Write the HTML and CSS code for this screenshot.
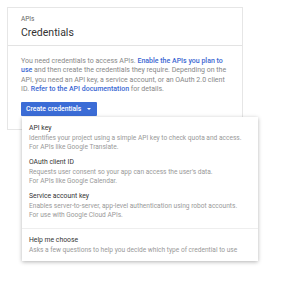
FILE: index.html
```html
<!DOCTYPE html>
<html lang="en">
<head>
    <meta charset="UTF-8">
    <title>Credentials</title>
    <link rel="stylesheet" href="styles.css">
</head>
<body>
    <div class="card">
        <div class="card-header">
            <div class="crumb">APIs</div>
            <h1>Credentials</h1>
        </div>
        <div class="card-body">
            <p class="intro">You need credentials to access APIs. <a href="#">Enable the APIs you plan to use</a> and then create the credentials they require. Depending on the API, you need an API key, a service account, or an OAuth 2.0 client ID. <a href="#">Refer to the API documentation</a> for details.</p>
            <div class="create">
                <button class="btn">Create credentials <span class="caret"></span></button>
                <div class="menu">
                    <div class="menu-item">
                        <div class="menu-title">API key</div>
                        <div class="menu-desc">Identifies your project using a simple API key to check quota and access.<br>For APIs like Google Translate.</div>
                    </div>
                    <div class="menu-item">
                        <div class="menu-title">OAuth client ID</div>
                        <div class="menu-desc">Requests user consent so your app can access the user's data.<br>For APIs like Google Calendar.</div>
                    </div>
                    <div class="menu-item">
                        <div class="menu-title">Service account key</div>
                        <div class="menu-desc">Enables server-to-server, app-level authentication using robot accounts.<br>For use with Google Cloud APIs.</div>
                    </div>
                    <div class="menu-sep"></div>
                    <div class="menu-item">
                        <div class="menu-title">Help me choose</div>
                        <div class="menu-desc">Asks a few questions to help you decide which type of credential to use</div>
                    </div>
                </div>
            </div>
        </div>
    </div>
</body>
</html>
```

FILE: styles.css
```css
* {
    margin: 0;
    padding: 0;
    box-sizing: border-box;
}

html,
body {
    height: 100%;
}

body {
    font-family: Roboto, 'Liberation Sans', sans-serif;
    background: #fff;
    color: #777;
    padding: 7px;
}

.card {
    width: 236px;
    border: 1px solid #e6e6e6;
}

.card-header {
    padding: 7px 13px 6px;
    border-bottom: 1px solid #e3e3e3;
}

.crumb {
    font-size: 6.5px;
    line-height: 9px;
    color: #666;
}

.card-header h1 {
    font-size: 10.5px;
    font-weight: 400;
    line-height: 13px;
    margin-top: 2px;
    color: #333;
}

.card-body {
    padding: 11px 13px 13px;
}

.intro {
    font-size: 7px;
    line-height: 9.3px;
    color: #888;
}

.intro a {
    color: #3b67d2;
    text-decoration: none;
    font-weight: 500;
}

.create {
    position: relative;
    margin-top: 8px;
}

.btn {
    display: flex;
    align-items: center;
    gap: 4px;
    height: 14px;
    padding: 0 6px 0 5px;
    border: none;
    border-radius: 1px;
    background: #3b6cd6;
    color: #fff;
    font-family: inherit;
    font-size: 6.8px;
    font-weight: 500;
}

.caret {
    display: inline-block;
    border-left: 2.5px solid transparent;
    border-right: 2.5px solid transparent;
    border-top: 2.5px solid #fff;
    margin-left: 2px;
}

.menu {
    position: absolute;
    top: 15px;
    left: 1px;
    width: 236px;
    background: #fff;
    box-shadow: 0 1px 4px rgba(0, 0, 0, 0.3);
    padding: 6px 0 6px;
}

.menu-item {
    padding: 0 7px;
    margin-bottom: 5px;
}

.menu-item:last-child {
    margin-bottom: 0;
}

.menu-title {
    font-size: 6.8px;
    line-height: 11px;
    color: #333;
}

.menu-desc {
    font-size: 6.6px;
    line-height: 9px;
    color: #999;
    white-space: nowrap;
}

.menu-sep {
    border-top: 1px solid #eee;
    margin: 8px 0 6px;
}
```
